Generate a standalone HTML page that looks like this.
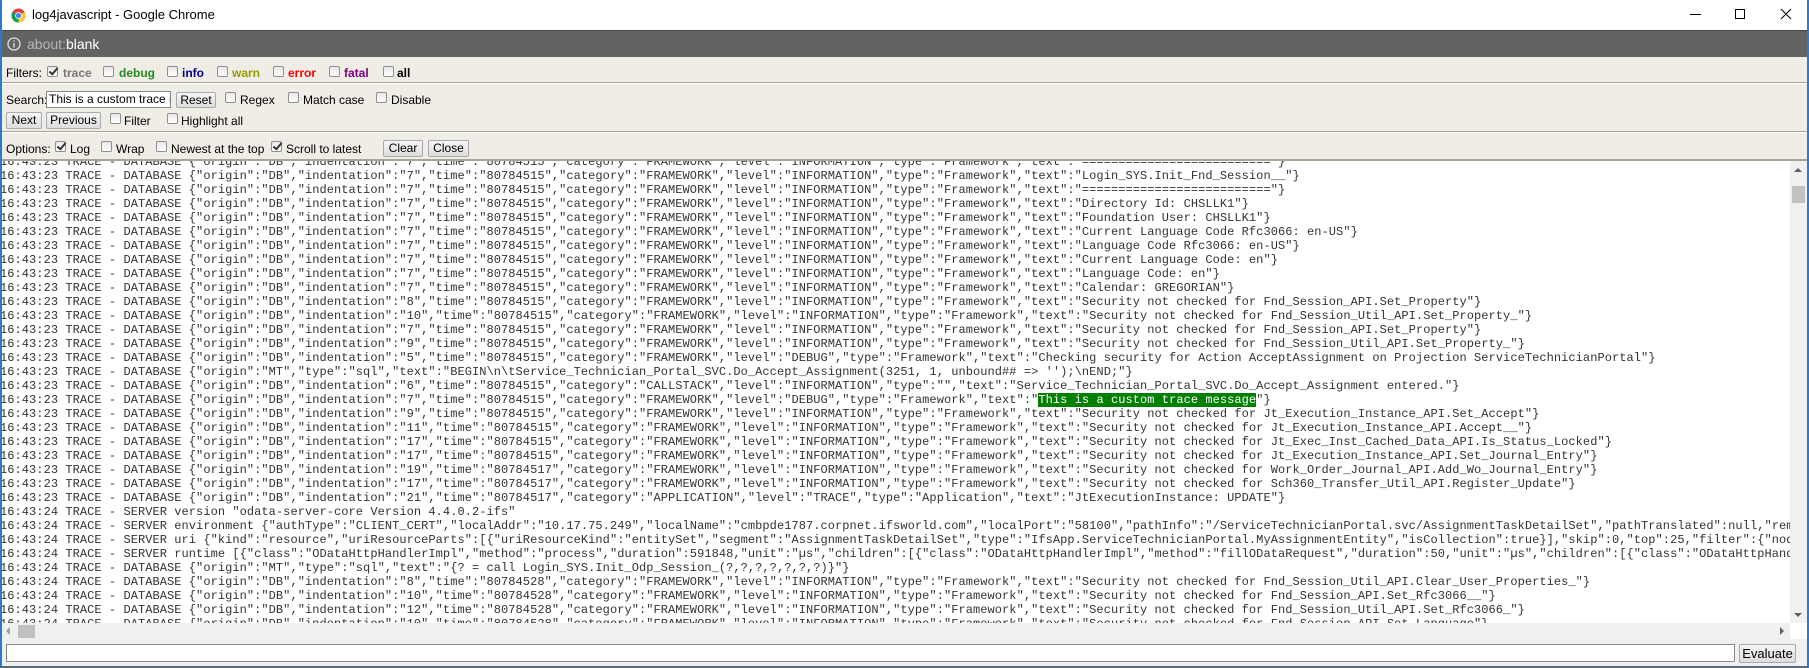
<!DOCTYPE html>
<html><head><meta charset="utf-8"><style>
*{box-sizing:border-box;margin:0;padding:0}
body{width:1809px;height:668px;overflow:hidden;background:#fff;font-family:"Liberation Sans",sans-serif;position:relative}
.abs{position:absolute}
#title{left:0;top:0;width:1809px;height:30px;background:#fff;border-left:2px solid #2b79d0;border-right:2px solid #2b79d0}
#addr{left:0;top:30px;width:1807px;height:27px;background:#636363;border-top:1px solid #444}
#panel{left:0;top:57px;width:1807px;height:104px;background:#f0ede6}
.sep{position:absolute;left:0;width:1807px;height:2px;border-top:1px solid #a8a598;border-bottom:1px solid #fff}
.t{position:absolute;font-size:12px;color:#000;white-space:nowrap;line-height:14px}
.cb{position:absolute;width:11px;height:11px;border:1px solid #8f8f8f;background:linear-gradient(#e8e8e8,#fff);border-radius:2px}
.cb.c::after{content:"";position:absolute;left:3px;top:-1px;width:3px;height:7px;border:solid #333;border-width:0 2px 2px 0;transform:rotate(40deg)}
.btn{position:absolute;border:1px solid #aaa;background:linear-gradient(#f6f6f6,#ddd);font-size:12px;text-align:center;line-height:15px;border-radius:2px}
#log{left:0;top:161px;width:1790px;height:462px;overflow:hidden;background:#fff}
#log pre{margin-top:-6px;font-family:"Liberation Mono",monospace;font-size:12px;letter-spacing:0.06px;line-height:14px;color:#333;white-space:pre}
.hl{background:#008000;color:#fff}
</style></head><body>
<div id="title" class="abs">
 <svg class="abs" style="left:9px;top:8px" width="15" height="15" viewBox="0 0 16 16"><circle cx="8" cy="8" r="7.5" fill="#db4437"/><path d="M8 8 L1.5 4.3 A7.5 7.5 0 0 0 8 15.5Z" fill="#0f9d58"/><path d="M8 8 L14.5 4.3 A7.5 7.5 0 0 1 8 15.5Z" fill="#fcc934"/><circle cx="8" cy="8" r="3.6" fill="#fff"/><circle cx="8" cy="8" r="2.8" fill="#4285f4"/></svg>
 <div class="t" style="left:30px;top:7px;font-size:13px;line-height:16px">log4javascript - Google Chrome</div>
 <div class="abs" style="left:1688px;top:14px;width:11px;height:1px;background:#000"></div>
 <div class="abs" style="left:1733px;top:9px;width:10px;height:10px;border:1px solid #000"></div>
 <svg class="abs" style="left:1778px;top:8px" width="12" height="12"><path d="M1 1L11 11M11 1L1 11" stroke="#000" stroke-width="1"/></svg>
</div>
<div id="addr" class="abs">
 <svg class="abs" style="left:7px;top:6px" width="14" height="14"><circle cx="7" cy="7" r="6" fill="none" stroke="#ddd" stroke-width="1.3"/><path d="M7 6v4.5M7 3.5v1.3" stroke="#ddd" stroke-width="1.4"/></svg>
 <div class="t" style="left:27px;top:5px;font-size:14px;line-height:16px;color:#b8b8b8">about:<span style="color:#fff">blank</span></div>
</div>
<div id="panel" class="abs">
 <div class="t" style="left:6px;top:9px">Filters:</div>
 <span class="cb c" style="left:47px;top:9px"></span><div class="t" style="left:63px;top:9px;font-weight:bold;color:#777">trace</div>
 <span class="cb" style="left:103px;top:9px"></span><div class="t" style="left:119px;top:9px;font-weight:bold;color:#228b22">debug</div>
 <span class="cb" style="left:167px;top:9px"></span><div class="t" style="left:182px;top:9px;font-weight:bold;color:#000090">info</div>
 <span class="cb" style="left:217px;top:9px"></span><div class="t" style="left:232px;top:9px;font-weight:bold;color:#999900">warn</div>
 <span class="cb" style="left:273px;top:9px"></span><div class="t" style="left:288px;top:9px;font-weight:bold;color:#ff0000">error</div>
 <span class="cb" style="left:329px;top:9px"></span><div class="t" style="left:344px;top:9px;font-weight:bold;color:#800080">fatal</div>
 <span class="cb" style="left:383px;top:9px"></span><div class="t" style="left:397px;top:9px;font-weight:bold">all</div>
 <div class="sep" style="top:25px"></div>
 <div class="t" style="left:6px;top:36px">Search:</div>
 <div class="abs" style="left:46px;top:34px;width:125px;height:17px;background:#fff;border:1px solid #888;font-size:12px;line-height:15px;padding-left:2px;overflow:hidden;white-space:nowrap">This is a custom trace message</div>
 <div class="btn" style="left:176px;top:35px;width:40px;height:16px">Reset</div>
 <span class="cb" style="left:225px;top:35px"></span><div class="t" style="left:240px;top:36px">Regex</div>
 <span class="cb" style="left:288px;top:35px"></span><div class="t" style="left:303px;top:36px">Match case</div>
 <span class="cb" style="left:376px;top:35px"></span><div class="t" style="left:391px;top:36px">Disable</div>
 <div class="btn" style="left:6px;top:55px;width:36px;height:17px">Next</div>
 <div class="btn" style="left:46px;top:55px;width:55px;height:17px">Previous</div>
 <span class="cb" style="left:110px;top:56px"></span><div class="t" style="left:124px;top:57px">Filter</div>
 <span class="cb" style="left:167px;top:56px"></span><div class="t" style="left:181px;top:57px">Highlight all</div>
 <div class="sep" style="top:74px"></div>
 <div class="t" style="left:6px;top:85px">Options:</div>
 <span class="cb c" style="left:55px;top:84px"></span><div class="t" style="left:70px;top:85px">Log</div>
 <span class="cb" style="left:101px;top:84px"></span><div class="t" style="left:116px;top:85px">Wrap</div>
 <span class="cb" style="left:156px;top:84px"></span><div class="t" style="left:171px;top:85px">Newest at the top</div>
 <span class="cb c" style="left:271px;top:84px"></span><div class="t" style="left:286px;top:85px">Scroll to latest</div>
 <div class="btn" style="left:383px;top:83px;width:40px;height:17px">Clear</div>
 <div class="btn" style="left:428px;top:83px;width:41px;height:17px">Close</div>
 <div class="abs" style="left:0;top:102px;width:1807px;height:2px;background:#a8a598"></div>
</div>
<div id="log" class="abs"><pre>16:43:23 TRACE - DATABASE {"origin":"DB","indentation":"7","time":"80784515","category":"FRAMEWORK","level":"INFORMATION","type":"Framework","text":"=========================="}
16:43:23 TRACE - DATABASE {"origin":"DB","indentation":"7","time":"80784515","category":"FRAMEWORK","level":"INFORMATION","type":"Framework","text":"Login_SYS.Init_Fnd_Session__"}
16:43:23 TRACE - DATABASE {"origin":"DB","indentation":"7","time":"80784515","category":"FRAMEWORK","level":"INFORMATION","type":"Framework","text":"=========================="}
16:43:23 TRACE - DATABASE {"origin":"DB","indentation":"7","time":"80784515","category":"FRAMEWORK","level":"INFORMATION","type":"Framework","text":"Directory Id: CHSLLK1"}
16:43:23 TRACE - DATABASE {"origin":"DB","indentation":"7","time":"80784515","category":"FRAMEWORK","level":"INFORMATION","type":"Framework","text":"Foundation User: CHSLLK1"}
16:43:23 TRACE - DATABASE {"origin":"DB","indentation":"7","time":"80784515","category":"FRAMEWORK","level":"INFORMATION","type":"Framework","text":"Current Language Code Rfc3066: en-US"}
16:43:23 TRACE - DATABASE {"origin":"DB","indentation":"7","time":"80784515","category":"FRAMEWORK","level":"INFORMATION","type":"Framework","text":"Language Code Rfc3066: en-US"}
16:43:23 TRACE - DATABASE {"origin":"DB","indentation":"7","time":"80784515","category":"FRAMEWORK","level":"INFORMATION","type":"Framework","text":"Current Language Code: en"}
16:43:23 TRACE - DATABASE {"origin":"DB","indentation":"7","time":"80784515","category":"FRAMEWORK","level":"INFORMATION","type":"Framework","text":"Language Code: en"}
16:43:23 TRACE - DATABASE {"origin":"DB","indentation":"7","time":"80784515","category":"FRAMEWORK","level":"INFORMATION","type":"Framework","text":"Calendar: GREGORIAN"}
16:43:23 TRACE - DATABASE {"origin":"DB","indentation":"8","time":"80784515","category":"FRAMEWORK","level":"INFORMATION","type":"Framework","text":"Security not checked for Fnd_Session_API.Set_Property"}
16:43:23 TRACE - DATABASE {"origin":"DB","indentation":"10","time":"80784515","category":"FRAMEWORK","level":"INFORMATION","type":"Framework","text":"Security not checked for Fnd_Session_Util_API.Set_Property_"}
16:43:23 TRACE - DATABASE {"origin":"DB","indentation":"7","time":"80784515","category":"FRAMEWORK","level":"INFORMATION","type":"Framework","text":"Security not checked for Fnd_Session_API.Set_Property"}
16:43:23 TRACE - DATABASE {"origin":"DB","indentation":"9","time":"80784515","category":"FRAMEWORK","level":"INFORMATION","type":"Framework","text":"Security not checked for Fnd_Session_Util_API.Set_Property_"}
16:43:23 TRACE - DATABASE {"origin":"DB","indentation":"5","time":"80784515","category":"FRAMEWORK","level":"DEBUG","type":"Framework","text":"Checking security for Action AcceptAssignment on Projection ServiceTechnicianPortal"}
16:43:23 TRACE - DATABASE {"origin":"MT","type":"sql","text":"BEGIN\n\tService_Technician_Portal_SVC.Do_Accept_Assignment(3251, 1, unbound## => '');\nEND;"}
16:43:23 TRACE - DATABASE {"origin":"DB","indentation":"6","time":"80784515","category":"CALLSTACK","level":"INFORMATION","type":"","text":"Service_Technician_Portal_SVC.Do_Accept_Assignment entered."}
16:43:23 TRACE - DATABASE {"origin":"DB","indentation":"7","time":"80784515","category":"FRAMEWORK","level":"DEBUG","type":"Framework","text":"<span class="hl">This is a custom trace message</span>"}
16:43:23 TRACE - DATABASE {"origin":"DB","indentation":"9","time":"80784515","category":"FRAMEWORK","level":"INFORMATION","type":"Framework","text":"Security not checked for Jt_Execution_Instance_API.Set_Accept"}
16:43:23 TRACE - DATABASE {"origin":"DB","indentation":"11","time":"80784515","category":"FRAMEWORK","level":"INFORMATION","type":"Framework","text":"Security not checked for Jt_Execution_Instance_API.Accept__"}
16:43:23 TRACE - DATABASE {"origin":"DB","indentation":"17","time":"80784515","category":"FRAMEWORK","level":"INFORMATION","type":"Framework","text":"Security not checked for Jt_Exec_Inst_Cached_Data_API.Is_Status_Locked"}
16:43:23 TRACE - DATABASE {"origin":"DB","indentation":"17","time":"80784515","category":"FRAMEWORK","level":"INFORMATION","type":"Framework","text":"Security not checked for Jt_Execution_Instance_API.Set_Journal_Entry"}
16:43:23 TRACE - DATABASE {"origin":"DB","indentation":"19","time":"80784517","category":"FRAMEWORK","level":"INFORMATION","type":"Framework","text":"Security not checked for Work_Order_Journal_API.Add_Wo_Journal_Entry"}
16:43:23 TRACE - DATABASE {"origin":"DB","indentation":"17","time":"80784517","category":"FRAMEWORK","level":"INFORMATION","type":"Framework","text":"Security not checked for Sch360_Transfer_Util_API.Register_Update"}
16:43:23 TRACE - DATABASE {"origin":"DB","indentation":"21","time":"80784517","category":"APPLICATION","level":"TRACE","type":"Application","text":"JtExecutionInstance: UPDATE"}
16:43:24 TRACE - SERVER version "odata-server-core Version 4.4.0.2-ifs"
16:43:24 TRACE - SERVER environment {"authType":"CLIENT_CERT","localAddr":"10.17.75.249","localName":"cmbpde1787.corpnet.ifsworld.com","localPort":"58100","pathInfo":"/ServiceTechnicianPortal.svc/AssignmentTaskDetailSet","pathTranslated":null,"remoteAddr":"10.17.75.249"}
16:43:24 TRACE - SERVER uri {"kind":"resource","uriResourceParts":[{"uriResourceKind":"entitySet","segment":"AssignmentTaskDetailSet","type":"IfsApp.ServiceTechnicianPortal.MyAssignmentEntity","isCollection":true}],"skip":0,"top":25,"filter":{"nodeType":"binary"}}
16:43:24 TRACE - SERVER runtime [{"class":"ODataHttpHandlerImpl","method":"process","duration":591848,"unit":"µs","children":[{"class":"ODataHttpHandlerImpl","method":"fillODataRequest","duration":50,"unit":"µs","children":[{"class":"ODataHttpHandlerImpl"}]}]}]
16:43:24 TRACE - DATABASE {"origin":"MT","type":"sql","text":"{? = call Login_SYS.Init_Odp_Session_(?,?,?,?,?,?,?)}"}
16:43:24 TRACE - DATABASE {"origin":"DB","indentation":"8","time":"80784528","category":"FRAMEWORK","level":"INFORMATION","type":"Framework","text":"Security not checked for Fnd_Session_Util_API.Clear_User_Properties_"}
16:43:24 TRACE - DATABASE {"origin":"DB","indentation":"10","time":"80784528","category":"FRAMEWORK","level":"INFORMATION","type":"Framework","text":"Security not checked for Fnd_Session_API.Set_Rfc3066__"}
16:43:24 TRACE - DATABASE {"origin":"DB","indentation":"12","time":"80784528","category":"FRAMEWORK","level":"INFORMATION","type":"Framework","text":"Security not checked for Fnd_Session_Util_API.Set_Rfc3066_"}
16:43:24 TRACE - DATABASE {"origin":"DB","indentation":"10","time":"80784528","category":"FRAMEWORK","level":"INFORMATION","type":"Framework","text":"Security not checked for Fnd_Session_API.Set_Language"}</pre></div>
<div class="abs" style="left:1790px;top:161px;width:17px;height:462px;background:#f0f0f0"></div>
<div class="abs" style="left:1794px;top:168px;width:0;height:0;border-left:4px solid transparent;border-right:4px solid transparent;border-bottom:4px solid #606060"></div>
<div class="abs" style="left:1792px;top:186px;width:13px;height:17px;background:#c1c1c1"></div>
<div class="abs" style="left:1794px;top:613px;width:0;height:0;border-left:4px solid transparent;border-right:4px solid transparent;border-top:4px solid #606060"></div>
<div class="abs" style="left:0;top:623px;width:1790px;height:16px;background:#f0f0f0"></div>
<div class="abs" style="left:6px;top:627px;width:0;height:0;border-top:4px solid transparent;border-bottom:4px solid transparent;border-right:4px solid #a0a0a0"></div>
<div class="abs" style="left:18px;top:625px;width:17px;height:13px;background:#c1c1c1"></div>
<div class="abs" style="left:1780px;top:627px;width:0;height:0;border-top:4px solid transparent;border-bottom:4px solid transparent;border-left:4px solid #606060"></div>
<div class="abs" style="left:1790px;top:623px;width:17px;height:16px;background:#fff"></div>
<div class="abs" style="left:0;top:639px;width:1807px;height:27px;background:#f0f0f0"></div>
<div class="abs" style="left:6px;top:644px;width:1729px;height:18px;background:#fff;border:1px solid #8a8a8a"></div>
<div class="btn" style="left:1739px;top:644px;width:57px;height:19px;line-height:17px;font-size:13px">Evaluate</div>
<div class="abs" style="left:0;top:666px;width:1809px;height:2px;background:#5a6a7a"></div>
<div class="abs" style="left:0;top:30px;width:2px;height:636px;background:#2b79d0"></div>
<div class="abs" style="left:1807px;top:0;width:2px;height:668px;background:#2b79d0"></div>
</body></html>
